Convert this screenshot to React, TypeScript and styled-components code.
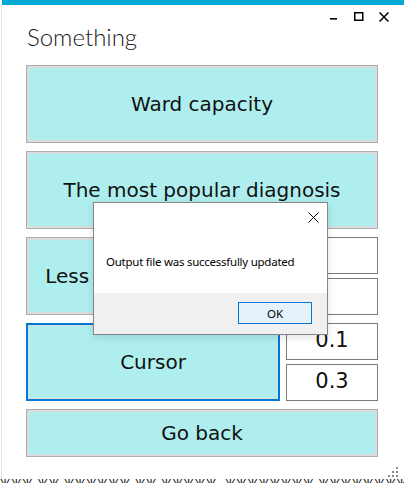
import React from 'react';
import styled, { createGlobalStyle } from 'styled-components';

const Global = createGlobalStyle`
  html, body { margin: 0; padding: 0; background: #fff; }
  #root { width: 404px; height: 483px; }
  svg { display: block; }
`;

const Screen = styled.div`
  position: relative;
  width: 404px;
  height: 483px;
  overflow: hidden;
  background: #fff;
  display: flex;
  flex-direction: column;
`;

const AccentBar = styled.div`
  flex: none;
  height: 5px;
  margin-left: 2px;
  background: #00a9d6;
`;

const Window = styled.div`
  flex: 1;
  display: flex;
  flex-direction: column;
  margin-left: 1px;
  border-left: 1px solid #e4e4e4;
  min-height: 0;
`;

const CaptionBar = styled.div`
  display: flex;
  justify-content: flex-end;
  padding: 7px 8px 0 0;
  height: 9px;
`;

const CaptionSlot = styled.div`
  width: 25px;
  height: 10px;
  display: flex;
  justify-content: center;
  align-items: flex-start;
`;

const Title = styled.h1`
  margin: 2px 0 0 25px;
  font-family: Lato, "Open Sans", sans-serif;
  font-weight: 300;
  font-size: 24px;
  line-height: 28px;
  color: #1a1a1a;
`;

const Stack = styled.div`
  display: flex;
  flex-direction: column;
  gap: 8px;
  margin: 14px 26px 0 24px;
`;

const Row = styled.div`
  display: grid;
  grid-template-columns: 254px 1fr;
  column-gap: 6px;
`;

const Fields = styled.div`
  display: flex;
  flex-direction: column;
  justify-content: space-between;
`;

const ActionButton = styled.button<{ $focused?: boolean; $short?: boolean }>`
  box-sizing: border-box;
  height: ${(p) => (p.$short ? 48 : 78)}px;
  width: 100%;
  margin: 0;
  padding: 0;
  background: #afeeee;
  border: ${(p) => (p.$focused ? '2px solid #0078d7' : '1px solid #adadad')};
  box-shadow: inset 0 0 0 ${(p) => (p.$focused ? 1 : 2)}px #dcdcdc;
  font-family: "DejaVu Sans", sans-serif;
  font-size: 20px;
  color: #111;
  white-space: nowrap;
  overflow: hidden;
  cursor: default;
`;

const Field = styled.div`
  box-sizing: border-box;
  height: 37px;
  border: 1px solid #7a7a7a;
  background: #fff;
  display: flex;
  align-items: center;
  justify-content: center;
  padding-bottom: 4px;
  font-family: "DejaVu Sans", sans-serif;
  font-size: 21px;
  color: #111;
`;

const Footer = styled.div`
  flex: 1;
  display: flex;
  justify-content: flex-end;
  align-items: flex-end;
  padding-right: 5px;
`;

const Strip = styled.div`
  flex: none;
  height: 5px;
  overflow: hidden;
  font-family: "Liberation Sans", sans-serif;
  font-size: 11px;
  line-height: 10px;
  color: #111;
  white-space: nowrap;
  letter-spacing: 1px;
`;

const Dialog = styled.div`
  position: absolute;
  left: 93px;
  top: 202px;
  width: 235px;
  height: 133px;
  box-sizing: border-box;
  border: 1px solid #858585;
  background: #fff;
  display: flex;
  flex-direction: column;
  box-shadow: 0 2px 8px rgba(0, 0, 0, 0.12);
  font-family: "Noto Sans", "Open Sans", sans-serif;
`;

const DialogBody = styled.div`
  position: relative;
  flex: 1;
  display: flex;
  align-items: center;
  padding: 0 0 0 12px;
`;

const DialogClose = styled.div`
  position: absolute;
  right: 8px;
  top: 9px;
  width: 11px;
  height: 11px;
`;

const Message = styled.div`
  margin-top: 26px;
  font-size: 11.5px;
  letter-spacing: -0.25px;
  color: #000;
`;

const DialogFooter = styled.div`
  height: 41px;
  background: #f0f0f0;
  display: flex;
  justify-content: flex-end;
  align-items: center;
  padding-right: 15px;
`;

const OkButton = styled.button`
  box-sizing: border-box;
  width: 74px;
  height: 22px;
  margin: 0 0 1px;
  padding: 0;
  border: 1px solid #0078d7;
  background: #e5f1fb;
  font-family: "Noto Sans", "Open Sans", sans-serif;
  font-size: 11.5px;
  color: #000;
`;

const Minimize = () => (
  <svg width="10" height="10" viewBox="0 0 10 10">
    <rect x="1" y="6" width="7" height="1.6" fill="#000" />
  </svg>
);

const Maximize = () => (
  <svg width="10" height="10" viewBox="0 0 10 10">
    <rect x="0.75" y="0.75" width="8" height="7.5" fill="none" stroke="#000" strokeWidth="1.5" />
  </svg>
);

const CloseIcon = ({ w = 1.5, s = 10 }: { w?: number; s?: number }) => (
  <svg width={s} height={s} viewBox={`0 0 ${s} ${s}`}>
    <path d={`M0.5 0.5 L${s - 0.5} ${s - 0.5} M${s - 0.5} 0.5 L0.5 ${s - 0.5}`} stroke="#000" strokeWidth={w} fill="none" />
  </svg>
);

const Grip = () => (
  <svg width="12" height="12" viewBox="0 0 12 12">
    {[
      [9, 1],
      [5, 5],
      [9, 5],
      [1, 9],
      [5, 9],
      [9, 9],
    ].map(([x, y], i) => (
      <rect key={i} x={x} y={y} width="2" height="2" fill="#8c8c8c" />
    ))}
  </svg>
);

export default function App() {
  return (
    <>
      <Global />
      <Screen>
        <AccentBar />
        <Window>
          <CaptionBar>
            <CaptionSlot><Minimize /></CaptionSlot>
            <CaptionSlot><Maximize /></CaptionSlot>
            <CaptionSlot><CloseIcon /></CaptionSlot>
          </CaptionBar>
          <Title>Something</Title>
          <Stack>
            <ActionButton>Ward capacity</ActionButton>
            <ActionButton>The most popular diagnosis</ActionButton>
            <Row>
              <ActionButton>Less than 10 patients</ActionButton>
              <Fields>
                <Field />
                <Field />
              </Fields>
            </Row>
            <Row>
              <ActionButton $focused>Cursor</ActionButton>
              <Fields>
                <Field>0.1</Field>
                <Field>0.3</Field>
              </Fields>
            </Row>
            <ActionButton $short>Go back</ActionButton>
          </Stack>
          <Footer>
            <Grip />
          </Footer>
        </Window>
        <Strip>
          ЖЖЖ ЖЖ ЖЖЖЖЖЖ ЖЖ ЖЖЖЖЖ, ЖЖЖЖЖЖЖЖ ЖЖЖЖЖЖЖЖ ЖЖЖЖЖЖЖ ЖЖЖЖЖЖЖЖЖЖЖЖ ЖЖЖЖЖЖЖ Ж ЖЖЖ
        </Strip>
        <Dialog>
          <DialogBody>
            <DialogClose><CloseIcon w={1} s={11} /></DialogClose>
            <Message>Output file was successfully updated</Message>
          </DialogBody>
          <DialogFooter>
            <OkButton>OK</OkButton>
          </DialogFooter>
        </Dialog>
      </Screen>
    </>
  );
}
